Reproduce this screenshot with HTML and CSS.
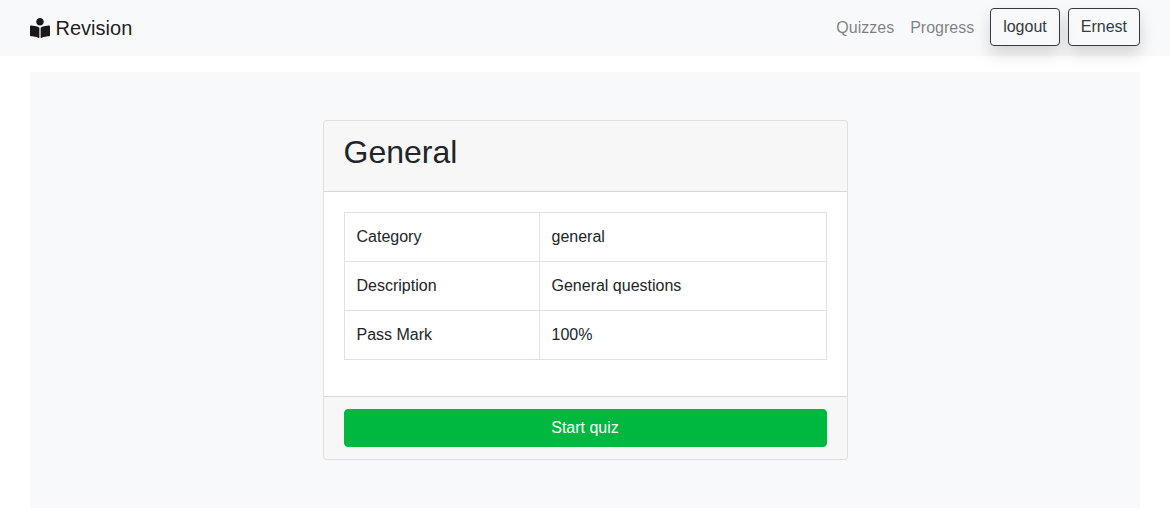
FILE: index.html
```html
<!DOCTYPE html>
<html lang="en">
<head>
<meta charset="utf-8">
<meta name="viewport" content="width=device-width, initial-scale=1">
<title>Revision</title>
<link rel="stylesheet" href="styles.css">
</head>
<body>
<header class="navbar">
  <div class="container navbar-inner">
    <a class="brand" href="#">
      <svg class="brand-icon" viewBox="0 0 512 512" aria-hidden="true"><path fill="currentColor" d="M352 96c0-53.02-42.98-96-96-96s-96 42.98-96 96 42.98 96 96 96 96-42.98 96-96zM233.59 241.1c-59.33-36.32-155.43-46.3-203.79-49.05C13.55 191.13 0 203.51 0 219.14v222.8c0 14.33 11.59 26.28 26.49 27.05 43.66 2.29 131.99 10.68 193.04 41.43 9.37 4.72 20.48-1.71 20.48-11.87V252.56c-.01-4.67-2.32-8.95-6.42-11.46zm248.61-49.05c-48.35 2.74-144.46 12.73-203.78 49.05-4.1 2.51-6.41 6.96-6.41 11.63v245.79c0 10.19 11.14 16.63 20.54 11.9 61.04-30.72 149.32-39.11 192.97-41.4 14.9-.78 26.49-12.73 26.49-27.06V219.14c-.01-15.63-13.56-28.01-29.81-27.09z"/></svg>
      Revision
    </a>
    <nav class="nav">
      <a class="nav-link" href="#">Quizzes</a>
      <a class="nav-link" href="#">Progress</a>
      <div class="nav-actions">
        <button class="btn btn-outline" type="button">logout</button>
        <button class="btn btn-outline" type="button">Ernest</button>
      </div>
    </nav>
  </div>
</header>
<div class="container">
  <main class="content">
    <section class="card">
      <div class="card-header">
        <h2 class="card-title">General</h2>
      </div>
      <div class="card-body">
        <table class="table">
          <tbody>
            <tr><td class="label-cell">Category</td><td>general</td></tr>
            <tr><td class="label-cell">Description</td><td>General questions</td></tr>
            <tr><td class="label-cell">Pass Mark</td><td>100%</td></tr>
          </tbody>
        </table>
      </div>
      <div class="card-footer">
        <button class="btn btn-start" type="button">Start quiz</button>
      </div>
    </section>
  </main>
</div>
</body>
</html>
```
FILE: styles.css
```css
*, *::before, *::after {
  box-sizing: border-box;
}

body {
  margin: 0;
  background: #fff;
  color: #212529;
  font-family: "Liberation Sans", Arial, sans-serif;
  font-size: 16px;
  line-height: 24px;
}

.container {
  width: 100%;
  max-width: 1140px;
  margin: 0 auto;
  padding: 0 15px;
}

.navbar {
  margin-bottom: 16px;
  padding: 8px 0;
  background: #f8f9fb;
}

.navbar-inner {
  display: flex;
  flex-wrap: wrap;
  align-items: center;
  justify-content: space-between;
}

.brand {
  color: rgba(0, 0, 0, 0.9);
  font-size: 20px;
  line-height: 30px;
  text-decoration: none;
}

.brand-icon {
  width: 20px;
  height: 20px;
  vertical-align: -3px;
}

.nav {
  display: flex;
  align-items: flex-start;
}

.nav-link {
  padding: 8px;
  color: rgba(0, 0, 0, 0.5);
  text-decoration: none;
}

.nav-actions {
  display: flex;
  gap: 8px;
  margin-left: 8px;
}

.btn {
  padding: 6px 12px;
  border: 1px solid transparent;
  border-radius: 4px;
  background: transparent;
  font: inherit;
  cursor: pointer;
}

.btn-outline {
  border-color: #343a40;
  color: #343a40;
  box-shadow: 0 8px 16px rgba(0, 0, 0, 0.15);
}

.btn-start {
  display: block;
  width: 100%;
  border-color: #00b83f;
  background: #00b83f;
  color: #fff;
}

.content {
  padding: 48px 15px;
  background: #f8f9fb;
}

.card {
  max-width: 525px;
  margin: 0 auto;
  border: 1px solid rgba(0, 0, 0, 0.125);
  border-radius: 4px;
  background: #fff;
  background-clip: border-box;
  overflow: hidden;
}

.card-header,
.card-footer {
  padding: 12px 20px;
  background: rgba(0, 0, 0, 0.03);
}

.card-header {
  border-bottom: 1px solid rgba(0, 0, 0, 0.125);
}

.card-footer {
  border-top: 1px solid rgba(0, 0, 0, 0.125);
}

.card-title {
  margin: 0 0 8px;
  font-size: 32px;
  font-weight: 500;
  line-height: 38px;
}

.card-body {
  padding: 20px;
}

.table {
  width: 100%;
  margin-bottom: 16px;
  border: 1px solid #dee2e6;
  border-collapse: collapse;
}

.table td {
  padding: 12px;
  border: 1px solid #dee2e6;
  vertical-align: top;
}

.table .label-cell {
  width: 195px;
}
```
